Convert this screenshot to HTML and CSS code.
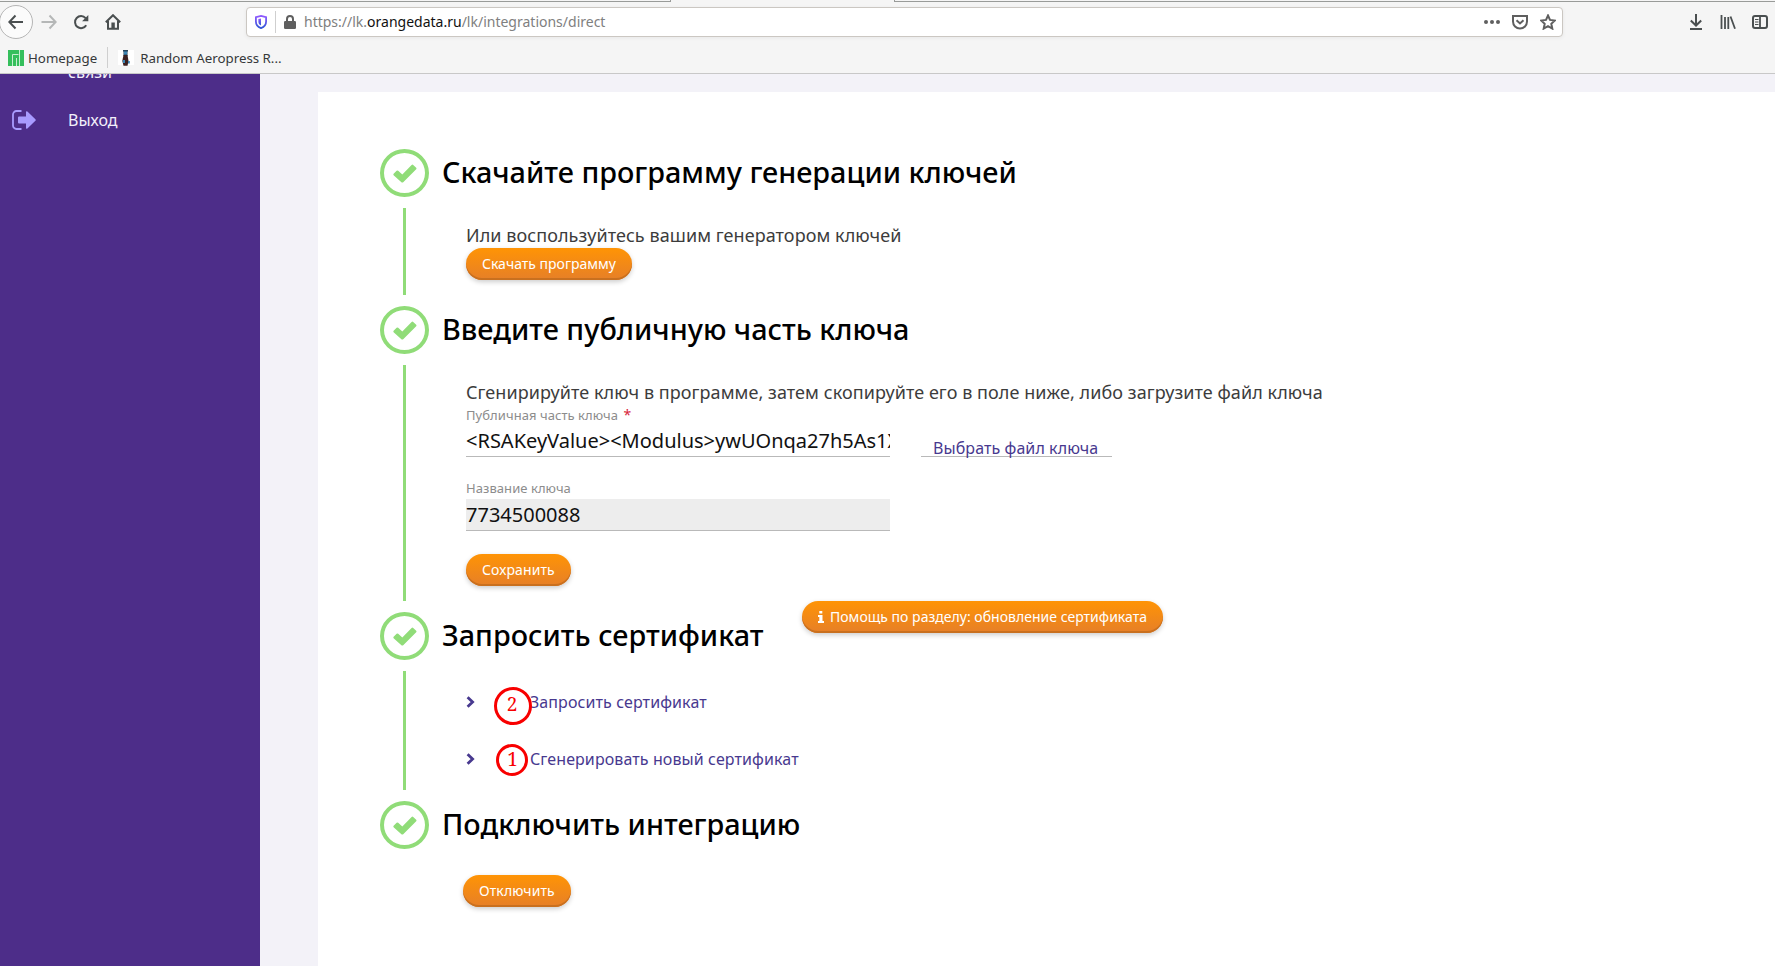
FILE: index.html
```html
<!DOCTYPE html>
<html lang="ru">
<head>
  <meta charset="UTF-8"/>
  <meta name="viewport" content="width=device-width, initial-scale=1.0"/>
  <title>Интеграции</title>
  <link rel="stylesheet" href="styles.css">
</head>
<body>

  <svg width="0" height="0" class="defs">
    <symbol id="check" viewBox="0 0 24 20">
      <path d="M0.6 10.8 3.6 7.8Q4.4 7.1 5.2 7.8L9.3 11.6 18.6 1.9Q19.4 1.1 20.2 1.9L23.2 4.7Q23.9 5.5 23.2 6.3L10.2 19.2Q9.3 20 8.4 19.2L0.6 12.2Q0 11.5 0.6 10.8Z"/>
    </symbol>
    <symbol id="chevron" viewBox="0 0 9 12">
      <path d="M1.6 1.2 6.6 6 1.6 10.8" fill="none" stroke="currentColor" stroke-width="2.8"/>
    </symbol>
  </svg>

  <header class="browser">
    <div class="tabs"><span class="tab-active"></span></div>
    <div class="toolbar">
      <div class="nav">
        <span class="back">
          <svg width="16" height="16" viewBox="0 0 16 16"><path d="M15 8H1.5M7.5 1.5 1.3 8l6.2 6.5"/></svg>
        </span>
        <svg class="forward" width="16" height="16" viewBox="0 0 16 16"><path d="M0.5 8h14M8.5 1.5 14.7 8l-6.2 6.5"/></svg>
        <svg class="reload" width="16" height="16" viewBox="0 0 16 16"><path d="M13.2 11.2A6 6 0 1 1 12.6 4.2"/><path class="solid" d="M15.3 1v6.2H9.1z"/></svg>
        <svg class="home" width="16" height="16" viewBox="0 0 16 16"><path d="M0.8 8.3 8 1.2l7.2 7.1M3 7v7.8h10V7"/><path class="solid" d="M6.4 8.5h3.4V15H6.4z"/></svg>
      </div>
      <div class="url-bar">
        <svg class="shield" width="12" height="14" viewBox="0 0 12 14">
          <defs><linearGradient id="sg" x1="0" y1="0" x2="0" y2="1"><stop offset="0" stop-color="#9059ff"/><stop offset="1" stop-color="#3157d6"/></linearGradient></defs>
          <path d="M6 .9 11.1 2.1v4.4C11.1 9.800 9 12 6 13.100 3 12 .9 9.800 .9 6.500V2.100z" fill="none" stroke="url(#sg)" stroke-width="1.800"/>
          <path d="M6 3.400v7.200C4.200 9.700 3.400 8.500 3.400 6.500V4z" fill="url(#sg)" stroke="none"/>
        </svg>
        <span class="url-sep"></span>
        <svg class="lock" width="12" height="14" viewBox="0 0 12 14"><path d="M3 7V4a3 3 0 0 1 6 0v3" fill="none" stroke="#5f5f5f" stroke-width="2"/><rect y="6" width="12" height="8" rx="1.200" fill="#5f5f5f" stroke="none"/></svg>
        <span class="url">https://lk.<b>orangedata.ru</b>/lk/integrations/direct</span>
        <div class="url-actions">
          <svg width="16" height="16" viewBox="0 0 16 16" class="dots"><circle cx="2" cy="8" r="2"/><circle cx="8" cy="8" r="2"/><circle cx="14" cy="8" r="2"/></svg>
          <svg width="16" height="16" viewBox="0 0 16 16"><path d="M1 2h14v5.500a7 7 0 0 1-14 0zM4.500 6.200 8 9.500l3.500-3.300"/></svg>
          <svg width="16" height="16" viewBox="0 0 16 16"><path d="m8 1.500 2 4.400 4.900.6-3.600 3.300 1 4.800L8 12.200l-4.300 2.400 1-4.800L1.100 6.500 6 5.900z"/></svg>
        </div>
      </div>
      <div class="tools">
        <svg width="16" height="16" viewBox="0 0 16 16"><path d="M8 0v11M2.800 6.500 8 11.500l5.200-5M2 15h12"/></svg>
        <svg width="16" height="16" viewBox="0 0 16 16"><path d="M1.500 1v14M5 3v12M8.300 3v12M10.500 2.500 15 14.800" class="thin"/></svg>
        <svg width="16" height="16" viewBox="0 0 16 16"><rect x="1" y="2" width="14" height="12" rx="2"/><path d="M8 2v12" class="thin"/><path d="M3 5.500h3.500M3 8h3.500M3 10.500h3.500" class="hair"/></svg>
      </div>
    </div>
    <div class="bookmarks">
      <svg width="16" height="16" viewBox="0 0 16 16"><path fill="#35bf5c" d="M0 0h16v16H0z"/><path d="M4.500 16V4.500H10.500M8.500 16V8M11.500 0v16" fill="none" stroke="#c8efd2" stroke-width="1"/></svg>
      <span class="bm-home">Homepage</span>
      <span class="bm-sep"></span>
      <svg class="aero" width="16" height="16" viewBox="0 0 16 16"><path fill="#fff" d="M0 0h16v15H0z"/><path fill="#25445c" d="M5 0h5v1.500H9.500V6h-4V1.500H5z"/><path fill="#3b2020" d="M5.500 5h4l1 6-1 4.800h-4L4.300 11z"/><path fill="#3d86b5" d="M6 1.500h3v3H6zM5 10h2v3H5zM10 11h1.800v2.500H10z"/></svg>
      <span class="bm-aero">Random Aeropress R...</span>
    </div>
  </header>

  <div class="page">
    <nav class="sidebar">
      <div class="menu-item first">связи</div>
      <div class="menu-item">
        <svg width="24" height="20" viewBox="0 0 24 20"><path d="M9.500 1H4.500A3.500 3.500 0 0 0 1 4.500v11A3.500 3.500 0 0 0 4.500 19H9.500" fill="none" stroke="#a89bff" stroke-width="1.800"/><path d="M6 7.500q0-1 1-1h7V2.200q0-1.700 1.400-.6l8 7.600q.8.800 0 1.600l-8 7.600q-1.400 1.100-1.400-.6v-4.300H7q-1 0-1-1z" fill="#a89bff"/></svg>
        <span>Выход</span>
      </div>
    </nav>

    <main class="card">
      <section class="step step-download">
        <div class="marker"><span class="circle"><svg><use href="#check"/></svg></span><i></i></div>
        <div class="step-body">
          <h2>Скачайте программу генерации ключей</h2>
          <div class="content">
            <p>Или воспользуйтесь вашим генератором ключей</p>
            <button class="btn">Скачать программу</button>
          </div>
        </div>
      </section>

      <section class="step step-key">
        <div class="marker"><span class="circle"><svg><use href="#check"/></svg></span><i></i></div>
        <div class="step-body">
          <h2>Введите публичную часть ключа</h2>
          <div class="content">
            <p class="key-hint">Сгенирируйте ключ в программе, затем скопируйте его в поле ниже, либо загрузите файл ключа</p>
            <div class="row">
              <div class="field">
                <label>Публичная часть ключа <em>*</em></label>
                <div class="input">&lt;RSAKeyValue&gt;&lt;Modulus&gt;ywUOnqa27h5As1X</div>
              </div>
              <a class="file">Выбрать файл ключа</a>
            </div>
            <div class="field">
              <label>Название ключа</label>
              <div class="input disabled">7734500088</div>
            </div>
            <button class="btn">Сохранить</button>
          </div>
        </div>
      </section>

      <section class="step step-cert">
        <div class="marker"><span class="circle"><svg><use href="#check"/></svg></span><i></i></div>
        <div class="step-body">
          <h2>Запросить сертификат</h2>
          <button class="btn help"><svg width="6" height="12" viewBox="0 0 6 12"><path d="M1.300 0h3v2.600h-3zM0 4h4.500v6H6v2H0v-2h1.300V6H0z" fill="#fff"/></svg>Помощь по разделу: обновление сертификата</button>
          <div class="content links">
            <div class="link-row"><svg><use href="#chevron"/></svg><a>Запросить сертификат</a><span class="mark mark-2">2</span></div>
            <div class="link-row"><svg><use href="#chevron"/></svg><a>Сгенерировать новый сертификат</a><span class="mark mark-1">1</span></div>
          </div>
        </div>
      </section>

      <section class="step step-connect">
        <div class="marker"><span class="circle"><svg><use href="#check"/></svg></span></div>
        <div class="step-body">
          <h2>Подключить интеграцию</h2>
          <div class="content">
            <button class="btn">Отключить</button>
          </div>
        </div>
      </section>
    </main>
  </div>

</body>
</html>
```
FILE: styles.css
```css
:root {
  --green: #90dc78;
  --purple: #4d2d89;
  --link: #48398f;
  --chrome: #f5f5f5;
}

* {
  box-sizing: border-box;
}

body {
  margin: 0;
  height: 100vh;
  display: flex;
  flex-direction: column;
  overflow: hidden;
  font-family: 'Noto Sans', 'Open Sans', sans-serif;
  background: #f3f2f8;
}

.defs {
  position: absolute;
}

svg {
  flex: none;
}

/* Browser */
.browser {
  height: 74px;
  flex: none;
  background: var(--chrome);
  border-bottom: 1px solid #c8c8c8;
  color: #36393a;
}

.tabs {
  height: 2px;
  border-bottom: 1px solid #999b99;
}

.tab-active {
  display: block;
  width: 225px;
  height: 2px;
  margin-left: 670px;
  background: var(--chrome);
  border: solid #999b99;
  border-width: 0 1px;
}

.toolbar {
  height: 39px;
  display: flex;
  align-items: center;
}

.toolbar svg {
  fill: none;
  stroke: #4a4f50;
  stroke-width: 2;
}

.nav {
  width: 246px;
  display: flex;
  align-items: center;
}

.back {
  width: 34px;
  height: 34px;
  margin-left: -1px;
  border: 1px solid #b5b5b5;
  border-radius: 50%;
  background: #fbfbfb;
  display: flex;
  align-items: center;
  justify-content: center;
}

.toolbar .forward {
  margin-left: 8px;
  stroke: #b5b7b7;
}

.reload {
  margin-left: 16px;
}

.home {
  margin-left: 16px;
}

.toolbar .solid {
  fill: #4a4f50;
  stroke: none;
}

.toolbar .thin {
  stroke-width: 1.8;
}

.toolbar .hair {
  stroke-width: 1;
}

.url-bar {
  width: 1317px;
  height: 30px;
  border: 1px solid #cbc7c2;
  border-radius: 4px;
  background: #fff;
  box-shadow: 0 1px 4px rgba(0, 0, 0, 0.06);
  display: flex;
  align-items: center;
  padding: 0 6px 0 8px;
}

.url-sep {
  width: 1px;
  height: 22px;
  background: #cfcfcf;
  margin: 0 8px;
}

.url {
  margin-left: 8px;
  font-size: 14px;
  line-height: 28px;
  color: #808080;
}

.url b {
  font-weight: 400;
  color: #111;
}

.url-actions {
  margin-left: auto;
  display: flex;
  gap: 12px;
}

.url-bar .url-actions svg {
  stroke: #5f5f5f;
}

.url-bar .url-actions .dots {
  fill: #5f5f5f;
  stroke: none;
}

.tools {
  margin-left: 125px;
  display: flex;
  gap: 16px;
}

.bookmarks {
  height: 32px;
  padding: 1px 0 0 8px;
  display: flex;
  align-items: center;
  font-size: 13.3px;
}

.bm-home {
  margin-left: 4px;
}

.bm-sep {
  width: 1px;
  height: 21px;
  background: #cfcfcf;
  margin: 0 10px;
}

.bm-aero {
  margin-left: 6px;
}

/* Page */
.page {
  flex: 1;
  min-height: 0;
  display: flex;
}

.sidebar {
  width: 260px;
  background: var(--purple);
  color: #f3f0fa;
  font-size: 16px;
  overflow: hidden;
}

.menu-item {
  height: 46px;
  padding-left: 12px;
  display: flex;
  align-items: center;
}

.menu-item.first {
  height: 22px;
  margin-top: -13px;
  margin-bottom: 14px;
  padding-left: 68px;
}

.menu-item span {
  margin-left: 32px;
}

.card {
  flex: 1;
  margin: 18px 0 0 58px;
  padding: 57px 0 0 62px;
  background: #fff;
}

.step {
  display: flex;
}

.step-download {
  height: 157px;
}

.step-key {
  height: 306px;
}

.step-cert {
  height: 189px;
}

.marker {
  width: 49px;
  display: flex;
  flex-direction: column;
  align-items: center;
}

.marker i {
  flex: 1;
  width: 3px;
  margin: 11px 0;
  background: var(--green);
}

.circle {
  width: 49px;
  height: 48px;
  border: 4px solid var(--green);
  border-radius: 50%;
  display: flex;
  align-items: center;
  justify-content: center;
}

.circle svg {
  width: 24px;
  height: 20px;
  fill: var(--green);
}

.step-body {
  flex: 1;
  position: relative;
  padding-left: 13px;
}

h2 {
  margin: 0;
  font-size: 28.8px;
  font-weight: 500;
  line-height: 46px;
  color: #000;
}

.content {
  margin: 27px 0 0 24px;
}

p {
  margin: 0;
  font-size: 18px;
  line-height: 26px;
  letter-spacing: 0.07px;
  color: #3c3c3c;
}

.key-hint {
  margin-bottom: 1px;
}

.btn {
  display: block;
  height: 32px;
  padding: 0 16px;
  border: none;
  border-radius: 16px;
  background: linear-gradient(#ff9405, #e67f28);
  box-shadow: inset 0 -2px 0 #c9701f, 0 2px 5px rgba(0, 0, 0, 0.2);
  color: #fff;
  font-family: inherit;
  font-size: 14px;
  line-height: 32px;
}

.row {
  display: flex;
  align-items: flex-end;
  gap: 31px;
  margin-bottom: 23px;
}

.field {
  width: 424px;
}

.field label {
  display: block;
  height: 19px;
  font-size: 13px;
  line-height: 17px;
  letter-spacing: 0.06px;
  color: #8c8c8c;
}

.field em {
  margin-left: 2px;
  font-size: 14px;
  font-style: normal;
  color: #d8243c;
}

.input {
  height: 32px;
  overflow: hidden;
  border-bottom: 1px solid #b9b9b9;
  font-size: 20px;
  line-height: 32px;
  white-space: nowrap;
  color: #111;
}

.input.disabled {
  background: #ededed;
}

.field + .btn {
  margin-top: 23px;
  letter-spacing: 0.1px;
}

.file {
  width: 191px;
  height: 22px;
  padding-left: 12px;
  border-bottom: 1px solid #b9b9b9;
  font-size: 16px;
  line-height: 27px;
  letter-spacing: 0.08px;
  color: var(--link);
}

.help {
  position: absolute;
  left: 373px;
  top: -11px;
  display: flex;
  align-items: center;
  letter-spacing: 0.02px;
}

.help svg {
  margin-right: 6px;
}

.links {
  margin-top: 15px;
}

.link-row {
  position: relative;
  height: 57px;
  display: flex;
  align-items: center;
  font-size: 16px;
  letter-spacing: 0.1px;
  color: var(--link);
}

.link-row svg {
  width: 9px;
  height: 12px;
}

.link-row a {
  margin-left: 55px;
}

/* red numbers drawn over the links */
.mark {
  position: absolute;
  border: 3px solid #f80000;
  border-radius: 50%;
  color: #f80000;
  font-family: 'Noto Serif', 'DejaVu Serif', serif;
  text-align: center;
}

.mark-2 {
  left: 28px;
  top: 14px;
  width: 38px;
  height: 38px;
  padding-right: 2px;
  font-size: 19px;
  line-height: 28px;
}

.mark-1 {
  left: 30px;
  top: 14px;
  width: 32px;
  height: 32px;
  padding-left: 1px;
  font-size: 19px;
  line-height: 24px;
}

.step-connect .content {
  margin: 28px 0 0 21px;
}

.step-connect .btn {
  letter-spacing: 0.1px;
}
```
